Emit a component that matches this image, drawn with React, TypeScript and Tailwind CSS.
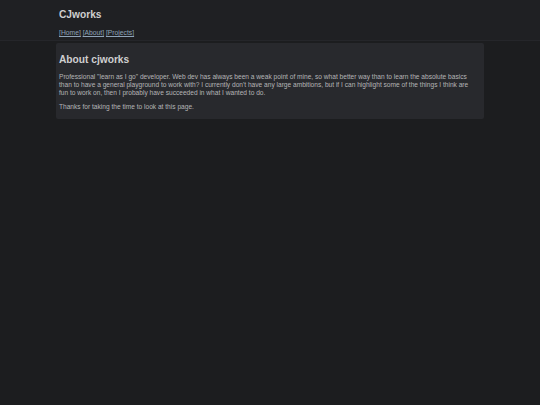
export default function App() {
  return (
    <div className="min-h-[405px] bg-[#1c1d1f] font-['Liberation_Sans',Arial,sans-serif]">
      <header className="h-[41px] border-b border-[#25262a] bg-[#1f2023]">
        <div className="mx-auto w-[428px] px-[3px] pt-[8px]">
          <h1 className="text-[10.2px] font-bold leading-[13px] text-[#cfcfd0]">CJworks</h1>
          <nav className="mt-[8px] text-[6.75px] leading-[8px] text-[#8ea3b8]">
            <a className="underline" href="#">[Home]</a>{" "}
            <a className="underline" href="#">[About]</a>{" "}
            <a className="underline" href="#">[Projects]</a>
          </nav>
        </div>
      </header>
      <main className="mx-auto mt-[2px] w-[428px] rounded-[2px] bg-[#28292d] pl-[3px] pr-[5px] pb-[8px] pt-[10px]">
        <h2 className="text-[10.2px] font-bold leading-[13px] text-[#cfcfd0]">About cjworks</h2>
        <p className="mt-[7px] text-[6.6px] leading-[8px] text-[#b5b5b7]">
          Professional "learn as I go" developer. Web dev has always been a weak point of mine, so what better way than to learn the absolute basics than to have a general playground to work with? I currently don't have any large ambitions, but if I can highlight some of the things I think are fun to work on, then I probably have succeeded in what I wanted to do.
        </p>
        <p className="mt-[6px] text-[6.6px] leading-[8px] text-[#b5b5b7]">Thanks for taking the time to look at this page.</p>
      </main>
    </div>
  );
}
